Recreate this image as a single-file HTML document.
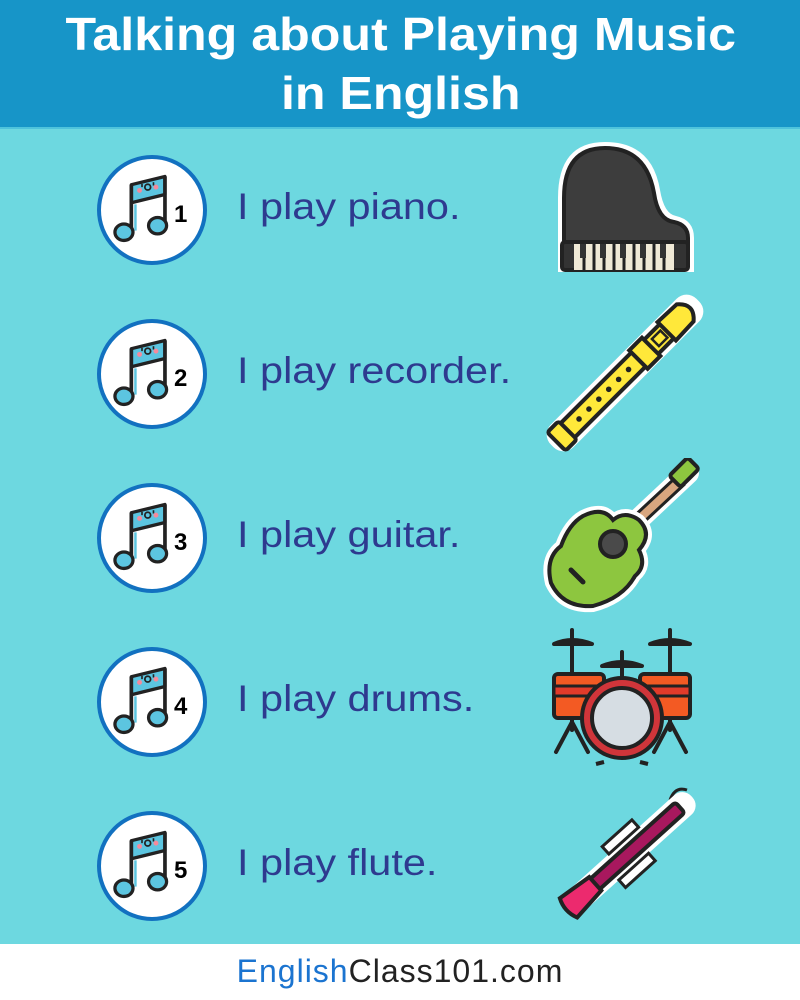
<!DOCTYPE html>
<html><head><meta charset="utf-8"><style>
body{margin:0;width:800px;height:1000px;overflow:hidden;background:#6dd8e0;font-family:"Liberation Sans",sans-serif;position:relative}
.hdr{position:absolute;left:0;top:0;width:800px;height:127px;background:#1795c8;border-bottom:2px solid #4ec3dc}
.hl{position:absolute;left:0;width:800px;text-align:center;color:#fff;font-weight:bold;font-size:46px;transform:scaleX(1.09);transform-origin:392px 0}
.foot{position:absolute;left:0;top:944px;width:800px;height:56px;background:#fff;text-align:center;font-size:32px;letter-spacing:1px;line-height:54px;color:#222}
.foot span{color:#1b74d0}
.row{position:absolute;left:0;width:800px;height:120px}
.circ{position:absolute;left:97px;top:0;width:102px;height:102px;border:4px solid #1271c0;border-radius:50%;background:#fff}
.txt{position:absolute;left:237px;top:31px;font-size:37px;color:#2e3a8f;transform:scaleX(1.12);transform-origin:0 0;white-space:nowrap}
.ic{position:absolute}
</style></head><body>
<div class="hdr"><div class="hl" style="top:7px">Talking about Playing Music</div><div class="hl" style="top:66px">in English</div></div>

<svg width="0" height="0" style="position:absolute"><defs>
<g id="note">
<path d="M37 24 L78 14 L78 36 L37 46Z" fill="#5cc5e0" stroke="#222" stroke-width="4" stroke-linejoin="round"/>
<path d="M37 24 L37 82" stroke="#222" stroke-width="4.5"/>
<path d="M78 14 L78 74" stroke="#222" stroke-width="4.5"/>
<path d="M42 48 L42 80" stroke="#5cc5e0" stroke-width="3"/>
<ellipse cx="28" cy="82" rx="11" ry="10" fill="#5cc5e0" stroke="#222" stroke-width="4"/>
<ellipse cx="69" cy="74" rx="11" ry="10" fill="#5cc5e0" stroke="#222" stroke-width="4"/>
<circle cx="57" cy="27" r="3.5" fill="none" stroke="#222" stroke-width="2.2"/>
<path d="M50 23 v4" stroke="#222" stroke-width="2"/><path d="M64 21 v4" stroke="#222" stroke-width="2"/>
<circle cx="47" cy="31" r="3" fill="#f58a9b"/><circle cx="67" cy="27" r="3" fill="#f58a9b"/>
</g></defs></svg>

<div class="row" style="top:155px"><div class="circ"><svg width="102" height="102"><use href="#note" transform="translate(0,6) scale(0.82)"/><text x="73" y="63" font-size="24" font-weight="bold" font-family="Liberation Sans">1</text></svg></div><div class="txt">I play piano.</div></div>
<div class="row" style="top:319px"><div class="circ"><svg width="102" height="102"><use href="#note" transform="translate(0,6) scale(0.82)"/><text x="73" y="63" font-size="24" font-weight="bold" font-family="Liberation Sans">2</text></svg></div><div class="txt">I play recorder.</div></div>
<div class="row" style="top:483px"><div class="circ"><svg width="102" height="102"><use href="#note" transform="translate(0,6) scale(0.82)"/><text x="73" y="63" font-size="24" font-weight="bold" font-family="Liberation Sans">3</text></svg></div><div class="txt">I play guitar.</div></div>
<div class="row" style="top:647px"><div class="circ"><svg width="102" height="102"><use href="#note" transform="translate(0,6) scale(0.82)"/><text x="73" y="63" font-size="24" font-weight="bold" font-family="Liberation Sans">4</text></svg></div><div class="txt">I play drums.</div></div>
<div class="row" style="top:811px"><div class="circ"><svg width="102" height="102"><use href="#note" transform="translate(0,6) scale(0.82)"/><text x="73" y="63" font-size="24" font-weight="bold" font-family="Liberation Sans">5</text></svg></div><div class="txt">I play flute.</div></div>

<!-- piano -->
<svg class="ic" style="left:550px;top:138px" width="150" height="145">
<path d="M8 134 L8 60 Q8 4 55 4 Q102 4 110 52 Q114 76 126 78 Q144 82 144 100 L144 134Z" fill="#fff"/>
<path d="M14 128 L14 60 Q14 10 55 10 Q96 10 104 55 Q108 82 124 84 Q138 87 138 100 L138 128Z" fill="#3d3d3d" stroke="#222" stroke-width="4" stroke-linejoin="round"/>
<rect x="12" y="104" width="126" height="28" rx="3" fill="#333" stroke="#222" stroke-width="4"/>
<rect x="24" y="106" width="100" height="26" fill="#f0e9d6"/>
<g stroke="#222" stroke-width="3"><path d="M34 106v26M44 106v26M54 106v26M64 106v26M74 106v26M84 106v26M94 106v26M104 106v26M114 106v26"/></g>
<g fill="#333"><rect x="30" y="106" width="6" height="14"/><rect x="50" y="106" width="6" height="14"/><rect x="70" y="106" width="6" height="14"/><rect x="90" y="106" width="6" height="14"/><rect x="110" y="106" width="6" height="14"/></g>
</svg>

<!-- recorder -->
<svg class="ic" style="left:540px;top:288px" width="170" height="170">
<g transform="rotate(-45 85 85)">
<rect x="-18" y="69" width="206" height="32" rx="14" fill="#fff"/>
<rect x="-10" y="75" width="160" height="20" rx="4" fill="#ffe83a" stroke="#222" stroke-width="4"/>
<path d="M144 72 L170 73 Q184 85 170 97 L144 98Z" fill="#ffe83a" stroke="#222" stroke-width="4"/>
<rect x="104" y="72" width="18" height="26" fill="#ffe83a" stroke="#222" stroke-width="4"/>
<rect x="-12" y="72" width="16" height="26" rx="3" fill="#ffe83a" stroke="#222" stroke-width="4"/>
<g fill="#222"><circle cx="20" cy="85" r="2.8"/><circle cx="34" cy="85" r="2.8"/><circle cx="48" cy="85" r="2.8"/><circle cx="62" cy="85" r="2.8"/><circle cx="76" cy="85" r="2.8"/><circle cx="90" cy="85" r="2.8"/></g>
<rect x="128" y="80" width="12" height="10" fill="none" stroke="#222" stroke-width="2.5"/>
</g></svg>

<!-- guitar -->
<svg class="ic" style="left:543px;top:458px" width="160" height="155">
<path d="M80 76 L145 15" stroke="#fff" stroke-width="22" stroke-linecap="round"/>
<path d="M80 76 L138 22" stroke="#222" stroke-width="14"/>
<path d="M80 76 L138 22" stroke="#d9a67f" stroke-width="8"/>
<rect x="128" y="8" width="26" height="16" rx="3" transform="rotate(-45 139 15)" fill="#8dc63f" stroke="#222" stroke-width="4"/>
<path d="M40 58 Q60 48 70 62 Q82 52 96 62 Q110 76 96 92 Q104 108 92 118 Q80 140 50 148 Q20 150 8 125 Q2 100 18 88 Q26 66 40 58Z" fill="#8dc63f" stroke="#fff" stroke-width="12" paint-order="stroke"/>
<path d="M40 58 Q60 48 70 62 Q82 52 96 62 Q110 76 96 92 Q104 108 92 118 Q80 140 50 148 Q20 150 8 125 Q2 100 18 88 Q26 66 40 58Z" fill="#8dc63f" stroke="#222" stroke-width="4"/>
<circle cx="70" cy="86" r="13" fill="#4a4a4a" stroke="#222" stroke-width="4"/>
<path d="M28 112 L40 124" stroke="#222" stroke-width="5" stroke-linecap="round"/>
</svg>

<!-- drums -->
<svg class="ic" style="left:548px;top:622px" width="150" height="150">
<g stroke="#222" stroke-width="4" fill="none" stroke-linecap="round">
<path d="M24 8v100M122 8v100M74 30v30"/>
<path d="M24 100 L8 130M24 100 L40 130M122 100 L106 130M122 100 L138 130"/>
</g>
<path d="M6 22 Q24 14 44 22Z" fill="#ffe03a" stroke="#222" stroke-width="4" stroke-linejoin="round"/>
<path d="M102 22 Q122 14 142 22Z" fill="#ffe03a" stroke="#222" stroke-width="4" stroke-linejoin="round"/>
<path d="M54 44 Q74 36 94 44Z" fill="#ffe03a" stroke="#222" stroke-width="4" stroke-linejoin="round"/>
<rect x="6" y="52" width="50" height="44" rx="4" fill="#f35a23" stroke="#222" stroke-width="4"/>
<rect x="92" y="52" width="50" height="44" rx="4" fill="#f35a23" stroke="#222" stroke-width="4"/>
<rect x="6" y="64" width="50" height="10" fill="#e23b2a" stroke="#222" stroke-width="3"/>
<rect x="92" y="64" width="50" height="10" fill="#e23b2a" stroke="#222" stroke-width="3"/>
<circle cx="74" cy="96" r="40" fill="#d0353a" stroke="#222" stroke-width="4"/>
<circle cx="74" cy="96" r="30" fill="#d6dde3" stroke="#222" stroke-width="4"/>
<path d="M56 140 L48 142M92 140 L100 142" stroke="#222" stroke-width="4"/>
</svg>

<!-- flute -->
<svg class="ic" style="left:545px;top:782px" width="160" height="150">
<path d="M125 18 Q130 4 142 8" fill="none" stroke="#222" stroke-width="3"/>
<g transform="rotate(-42 80 75)">
<rect x="0" y="62" width="170" height="26" rx="12" fill="#fff"/>
<rect x="34" y="68" width="120" height="14" rx="3" fill="#a8185e" stroke="#222" stroke-width="4"/>
<path d="M4 62 L40 66 L40 84 L4 88 Q-2 75 4 62Z" fill="#ec2a6e" stroke="#222" stroke-width="4"/>
<rect x="70" y="52" width="40" height="10" fill="#fff" stroke="#222" stroke-width="3"/>
<rect x="60" y="88" width="40" height="10" fill="#fff" stroke="#222" stroke-width="3"/>
</g></svg>

<div class="foot"><span>English</span>Class101.com</div>
</body></html>
